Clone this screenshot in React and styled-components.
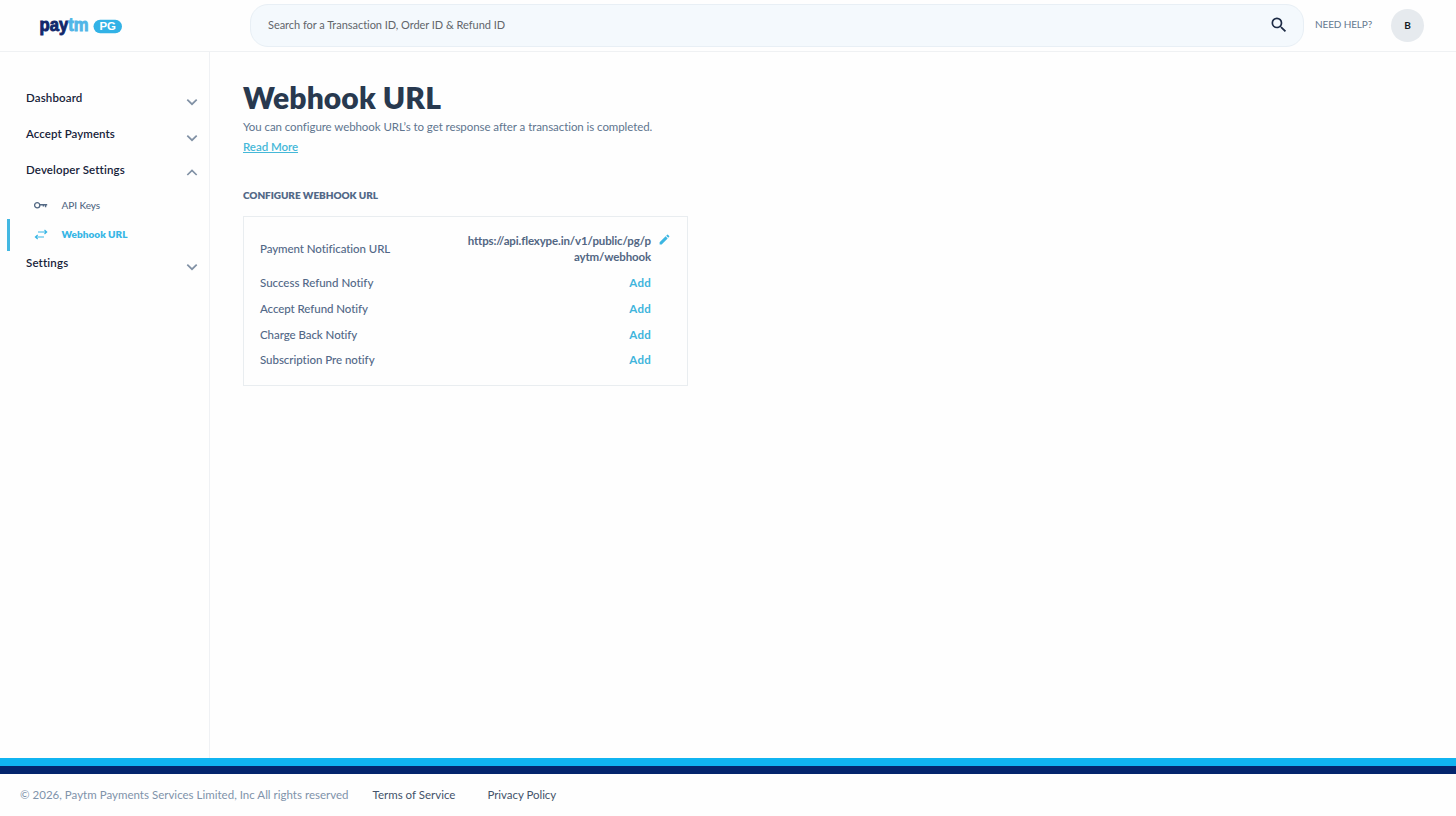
import React from "react";
import styled, { createGlobalStyle } from "styled-components";
import { MdSearch, MdEdit } from "react-icons/md";

const GlobalStyle = createGlobalStyle`
  * { box-sizing: border-box; }
  body { margin: 0; background: #fefefe; font-family: Lato, "Liberation Sans", sans-serif; font-size: 11.5px; }
  a { text-decoration: none; color: inherit; }
`;

const track = ({ $track = 0 }) => `letter-spacing: ${$track}px;`;

const Page = styled.div`
  display: flex;
  flex-direction: column;
  height: 816px;
  white-space: nowrap;
`;
const Header = styled.header`
  display: flex;
  height: 52px;
  flex: none;
  border-bottom: 1px solid #eff1f3;
`;
const LogoLink = styled.a`
  width: 250px;
  padding: 11px 0 0 38px;
`;
const SearchBar = styled.div`
  display: flex;
  align-items: center;
  justify-content: space-between;
  width: 1054px;
  height: 43px;
  margin-top: 4px;
  padding: 0 16px 2px 17px;
  border: 1px solid #e8eff5;
  border-radius: 18px;
  background: #f4f9fd;
  color: #62666b;
  font-size: 11px;
`;
const SearchText = styled.span`${track}`;
const SearchIcon = styled(MdSearch)`
  color: #1d2b45;
  font-size: 20px;
  margin-right: -2px;
`;
const Help = styled.a`
  margin: 17px 0 0 11px;
  width: 76px;
  line-height: 14px;
  color: #65798f;
  font-size: 10px;
  ${track}
`;
const Avatar = styled.div`
  display: grid;
  place-items: center;
  width: 33px;
  height: 33px;
  margin-top: 9px;
  padding-bottom: 1px;
  border-radius: 50%;
  background: #e6eaee;
  color: #15191f;
  font-size: 10px;
  font-weight: 700;
`;
const Body = styled.div`
  display: flex;
  flex: 1;
  min-height: 0;
`;
const Sidebar = styled.nav`
  width: 210px;
  padding-top: 28px;
  border-right: 1px solid #eff1f4;
`;
const Section = styled.div`
  display: flex;
  justify-content: space-between;
  height: 36px;
  padding: 10px 11px 0 26px;
  line-height: 16px;
  color: #17233a;
  font-weight: 600;
  ${track}
  svg { margin-top: ${({ $open }) => ($open ? 5 : 6)}px; }
`;
const SubItem = styled.a`
  display: flex;
  align-items: center;
  height: ${({ $active }) => ($active ? 32 : 27)}px;
  margin-left: ${({ $active }) => ($active ? 6.5 : 7)}px;
  padding: 0 0 2px ${({ $active }) => ($active ? 24 : 26.5)}px;
  border-left: ${({ $active }) => ($active ? "3px solid #43b8e2" : "0")};
  color: ${({ $active }) => ($active ? "#38b6e5" : "#536984")};
  font-size: 10px;
  font-weight: ${({ $active }) => ($active ? 800 : 500)};
  ${track}
  svg { width: 14px; margin-right: 14px; flex: none; }
`;
const SubList = styled.div`
  padding-top: 4px;
  margin-bottom: -6px;
`;
const Main = styled.main`
  flex: 1;
  padding: 27px 33px;
`;
const Title = styled.h1`
  margin: 0;
  color: #28394f;
  font-size: 30px;
  font-weight: 800;
  line-height: 36px;
  ${track}
`;
const Description = styled.p`
  margin: 2px 0 0;
  line-height: 20px;
  color: #60758e;
  ${track}
`;
const ReadMore = styled.a`
  display: block;
  width: max-content;
  line-height: 20px;
  && { color: #45b8d8; text-decoration: underline; }
  text-underline-offset: 1px;
  text-decoration-skip-ink: none;
  font-weight: 600;
  ${track}
`;
const Subheading = styled.h2`
  margin: 29px 0 12px;
  line-height: 18px;
  color: #526887;
  font-size: 10px;
  font-weight: 800;
  ${track}
`;
const Card = styled.section`
  width: 445px;
  height: 170px;
  padding: 16px 16px 0;
  border: 1px solid #e9edf0;
`;
const Row = styled.div`
  display: flex;
  align-items: center;
  justify-content: space-between;
  height: ${({ $tall }) => ($tall ? 32 : 16)}px;
  margin-bottom: ${({ $gap = 10 }) => $gap}px;
  padding-right: ${({ $tall }) => ($tall ? 0 : 20)}px;
  line-height: 16px;
`;
const Label = styled.span`
  color: #526887;
  font-weight: 500;
  ${track}
`;
const UrlGroup = styled.div`
  display: flex;
  gap: 7px;
  svg { color: #3cb6e2; font-size: 13px; }
`;
const Url = styled.span`
  color: #526683;
  font-weight: 700;
  text-align: right;
  ${track}
`;
const AddLink = styled.a`
  && { color: #3fb5dc; }
  font-weight: 700;
  letter-spacing: 0.25px;
`;
const Footer = styled.footer`
  height: 58px;
  flex: none;
  border-top: 8px solid #10b4f1;
`;
const NavyBand = styled.div`
  height: 8px;
  background: #04256d;
`;
const FooterLinks = styled.div`
  display: flex;
  gap: 32px;
  padding: 13px 20px;
  line-height: 16px;
  color: #43536a;
`;
const Copyright = styled.span`
  color: #8093aa;
  margin-right: -8px;
  ${track}
`;
const FooterLink = styled.a`${track}`;

const Logo = () => (
  <svg width="86" height="30" viewBox="0 0 86 30" fontFamily='"Liberation Sans", sans-serif' fontWeight="700" fontSize="17.5">
    <text x="1.6" y="19.6" strokeWidth=".9" textLength="49" lengthAdjust="spacingAndGlyphs">
      <tspan fill="#12276b" stroke="#12276b">pay</tspan><tspan fill="#51b6e7" stroke="#51b6e7">tm</tspan>
    </text>
    <rect x="55.5" y="8.8" width="28.5" height="13.4" rx="6.7" fill="#32b2e6" />
    <text x="61.5" y="19.4" fill="#fff" fontSize="11" textLength="16.5" lengthAdjust="spacingAndGlyphs">PG</text>
  </svg>
);
const Chevron = ({ up }) => (
  <svg width="12" height="12" viewBox="0 0 12 12" fill="none" stroke="#8191a5" strokeWidth="1.7">
    <path d={up ? "M1.3 8 6 3.4 10.7 8" : "M1.3 3.6 6 8.2 10.7 3.6"} />
  </svg>
);
const KeyIcon = () => (
  <svg width="14" height="12" viewBox="0 0 14 12" fill="none" stroke="currentColor">
    <circle cx="3.2" cy="6.2" r="2.6" strokeWidth="1.3" />
    <path d="M5.9 5.7H13.2M11.6 5.7V8.2M9.4 5.7V7.5" strokeWidth="1.4" />
  </svg>
);
const SwapIcon = () => (
  <svg width="14" height="12" viewBox="0 0 14 12" fill="none" stroke="currentColor" strokeWidth="1.15">
    <path d="M4 4h8.5M10.5 2l2.2 2L10.5 6M10 9H1.5M3.7 7 1.4 9 3.7 11" />
  </svg>
);

const notifications = [
  { label: "Success Refund Notify", track: -0.01, gap: 10 },
  { label: "Accept Refund Notify", track: -0.07, gap: 10 },
  { label: "Charge Back Notify", track: -0.06, gap: 9 },
  { label: "Subscription Pre notify", track: -0.04, gap: 0 },
];

export default function App() {
  return (
    <Page>
      <GlobalStyle />
      <Header>
        <LogoLink><Logo /></LogoLink>
        <SearchBar>
          <SearchText $track={-0.04}>Search for a Transaction ID, Order ID &amp; Refund ID</SearchText>
          <SearchIcon />
        </SearchBar>
        <Help $track={-0.14}>NEED HELP?</Help>
        <Avatar>B</Avatar>
      </Header>
      <Body>
        <Sidebar>
          <Section $track={0.14}>Dashboard<Chevron /></Section>
          <Section $track={0.07}>Accept Payments<Chevron /></Section>
          <Section $open $track={0.13}>Developer Settings<Chevron up /></Section>
          <SubList>
            <SubItem $track={-0.08}><KeyIcon />API Keys</SubItem>
            <SubItem $active $track={0.03}><SwapIcon />Webhook URL</SubItem>
          </SubList>
          <Section $track={0.16}>Settings<Chevron /></Section>
        </Sidebar>
        <Main>
          <Title $track={0.09}>Webhook URL</Title>
          <Description $track={-0.07}>You can configure webhook URL’s to get response after a transaction is completed.</Description>
          <ReadMore $track={-0.05}>Read More</ReadMore>
          <Subheading $track={-0.06}>CONFIGURE WEBHOOK URL</Subheading>
          <Card>
            <Row $tall>
              <Label $track={-0.07}>Payment Notification URL</Label>
              <UrlGroup>
                <Url $track={-0.13}>https://api.flexype.in/v1/public/pg/p<br />aytm/webhook</Url>
                <MdEdit />
              </UrlGroup>
            </Row>
            {notifications.map(({ label, track: t, gap }) => (
              <Row key={label} $gap={gap}>
                <Label $track={t}>{label}</Label>
                <AddLink>Add</AddLink>
              </Row>
            ))}
          </Card>
        </Main>
      </Body>
      <Footer>
        <NavyBand />
        <FooterLinks>
          <Copyright $track={0.012}>© 2026, Paytm Payments Services Limited, Inc All rights reserved</Copyright>
          <FooterLink $track={0}>Terms of Service</FooterLink>
          <FooterLink $track={-0.04}>Privacy Policy</FooterLink>
        </FooterLinks>
      </Footer>
    </Page>
  );
}
